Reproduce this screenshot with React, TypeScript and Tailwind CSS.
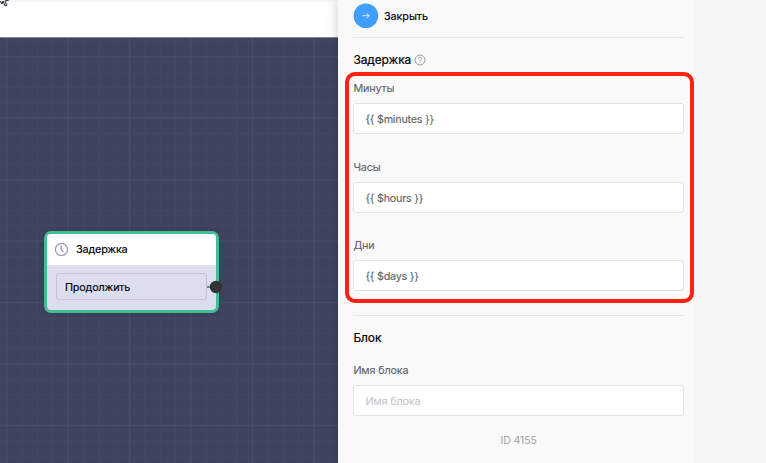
import React from "react";

function Grid() {
  return (
    <svg className="absolute inset-0 h-full w-full" aria-hidden="true">
      <defs>
        <pattern id="minor" x="6.2" y="18.3" width="15.36" height="15.36" patternUnits="userSpaceOnUse">
          <path d="M0 .5H15.36M.5 0V15.36" stroke="#484d6a" strokeWidth=".8" opacity=".4" />
        </pattern>
        <pattern id="major" x="6" y="18.1" width="61.44" height="61.44" patternUnits="userSpaceOnUse">
          <path d="M0 .6H61.44M.6 0V61.44" stroke="#4b506e" strokeWidth="1.1" opacity=".75" />
        </pattern>
      </defs>
      <rect width="100%" height="100%" fill="url(#minor)" />
      <rect width="100%" height="100%" fill="url(#major)" />
    </svg>
  );
}

function DelayNode() {
  return (
    <div className="absolute left-[44px] top-[193px] flex h-[81.5px] w-[175px] flex-col rounded-[7px] border-[3px] border-[#40bf93] bg-[#dcddee] text-[10.8px] tracking-[-0.17px] text-black shadow-[0_0_5px_rgba(30,34,60,.35)]">
      <div className="flex h-[31px] items-center rounded-t-[4px] bg-white pl-[7px]">
        <svg className="h-[15px] w-[15px]" viewBox="0 0 15 15" fill="none" stroke="#989dc2">
          <circle cx="7.5" cy="7.5" r="6.1" strokeWidth="1.25" />
          <path d="M7.2 3.5V7.7L9.3 9.7" strokeWidth="1.3" />
        </svg>
        <span className="ml-[7px] pt-[1.5px] [-webkit-text-stroke:0.15px_black]">Задержка</span>
      </div>
      <div className="relative ml-[9px] mt-[8px] flex h-[27px] w-[151px] items-center rounded-[3px] border border-[#c2c3d8] pl-[8px]">
        <span className="pt-[3px] [-webkit-text-stroke:0.15px_black]">Продолжить</span>
        <span className="absolute left-[150px] top-[12px] h-[2px] w-[6px] bg-[#777e94]" />
        <svg className="absolute left-[152px] top-[6px] h-[14px] w-[14px]" viewBox="0 0 14 14">
          <circle cx="7" cy="7" r="6.2" fill="#333" />
        </svg>
      </div>
    </div>
  );
}

function Field({ label, value, className = "" }: { label: string; value: string; className?: string }) {
  return (
    <div className={className}>
      <div className="h-[16px] text-[10.8px] leading-[17px] tracking-[-0.17px] text-[#606266] [-webkit-text-stroke:0.1px_#606266]">{label}</div>
      <div className="mt-[7px] flex h-[31px] items-center rounded-[3px] border border-[#e1e3ea] bg-white pl-[11px] pt-[3px] text-[10.8px] tracking-[-0.23px] text-[#606266] [-webkit-text-stroke:0.1px_#606266]">
        {value}
      </div>
    </div>
  );
}

export default function App() {
  return (
    <div className="relative flex h-[463px] w-[766px] overflow-hidden bg-[#f7f7f7] font-['Inter','Liberation_Sans',sans-serif]">
      <main className="flex w-[338px] shrink-0 flex-col">
        <header className="relative h-[38px] border-b border-[#85889c] bg-white">
          <div className="h-[2px] bg-[#f5f5f5]" />
          <svg className="absolute left-0 top-0 h-[8px] w-[10px]" viewBox="0 0 10 8">
            <path d="M0 1L2 4L3 1L5 6L7 5L5 1L9 0" fill="#ddd" stroke="#252238" strokeWidth="1" />
          </svg>
        </header>
        <section className="relative flex-1 bg-[#40435f]">
          <Grid />
          <DelayNode />
        </section>
      </main>
      <aside className="relative w-[356px] shrink-0 bg-[#f9f9f9] pl-[15.4px] pr-[10px] shadow-[-1px_0_11px_rgba(0,0,0,.18)]">
        <div className="flex h-[38px] items-start gap-[5.5px] border-b border-[#e3e4ec] pt-[3px]">
          <svg className="h-[25px] w-[25px] overflow-visible" viewBox="0 0 25 25" fill="none">
            <circle cx="12.9" cy="12.7" r="12.3" fill="#409eff" />
            <path d="M9.5 12.7H16.1M13.5 10.1L16.1 12.7L13.5 15.3" stroke="white" strokeWidth=".8" />
          </svg>
          <span className="text-[10.8px] leading-[27px] tracking-[-0.05px] text-black [-webkit-text-stroke:0.15px_black]">Закрыть</span>
        </div>
        <div className="mt-[13px] flex h-[18px] items-center text-[12px] tracking-[-0.12px] text-black [-webkit-text-stroke:0.2px_black]">
          Задержка
          <svg className="ml-[3px] h-[12px] w-[12px]" viewBox="0 0 12 12" fill="none" stroke="#909399">
            <circle cx="6" cy="6" r="5" strokeWidth=".9" />
            <path d="M4.4 4.8C4.4 2.7 7.6 2.8 7.6 4.7C7.6 5.8 6 5.7 6 7.2M6 8.2V9" strokeWidth=".9" />
          </svg>
        </div>
        <Field className="mt-[11px]" label="Минуты" value="{{ $minutes }}" />
        <Field className="mt-[25px]" label="Часы" value="{{ $hours }}" />
        <Field className="mt-[24px]" label="Дни" value="{{ $days }}" />
        <div className="mt-[24px] border-t border-[#e3e4ec]" />
        <h2 className="mt-[13px] h-[18px] text-[12px] leading-[18px] tracking-[-0.12px] text-black [-webkit-text-stroke:0.2px_black]">Блок</h2>
        <div className="mt-[15px] h-[16px] text-[10.8px] leading-[17px] tracking-[-0.17px] text-[#606266] [-webkit-text-stroke:0.1px_#606266]">Имя блока</div>
        <input
          className="mt-[7px] block h-[31px] w-full rounded-[3px] border border-[#e1e3ea] bg-white pl-[11px] pt-px text-[10.8px] tracking-[-0.17px] outline-none placeholder:text-[#bfc2cb]"
          placeholder="Имя блока"
        />
        <div className="mt-[17px] text-center text-[10.5px] leading-[16px] tracking-[-0.1px] text-[#a0a2a7]">ID 4155</div>
        <div className="pointer-events-none absolute left-[7px] top-[72px] h-[231px] w-[349px] rounded-[10px] border-4 border-[#ff2112]" />
      </aside>
      <div className="relative flex-1 bg-[#f7f7f7]" />
    </div>
  );
}
